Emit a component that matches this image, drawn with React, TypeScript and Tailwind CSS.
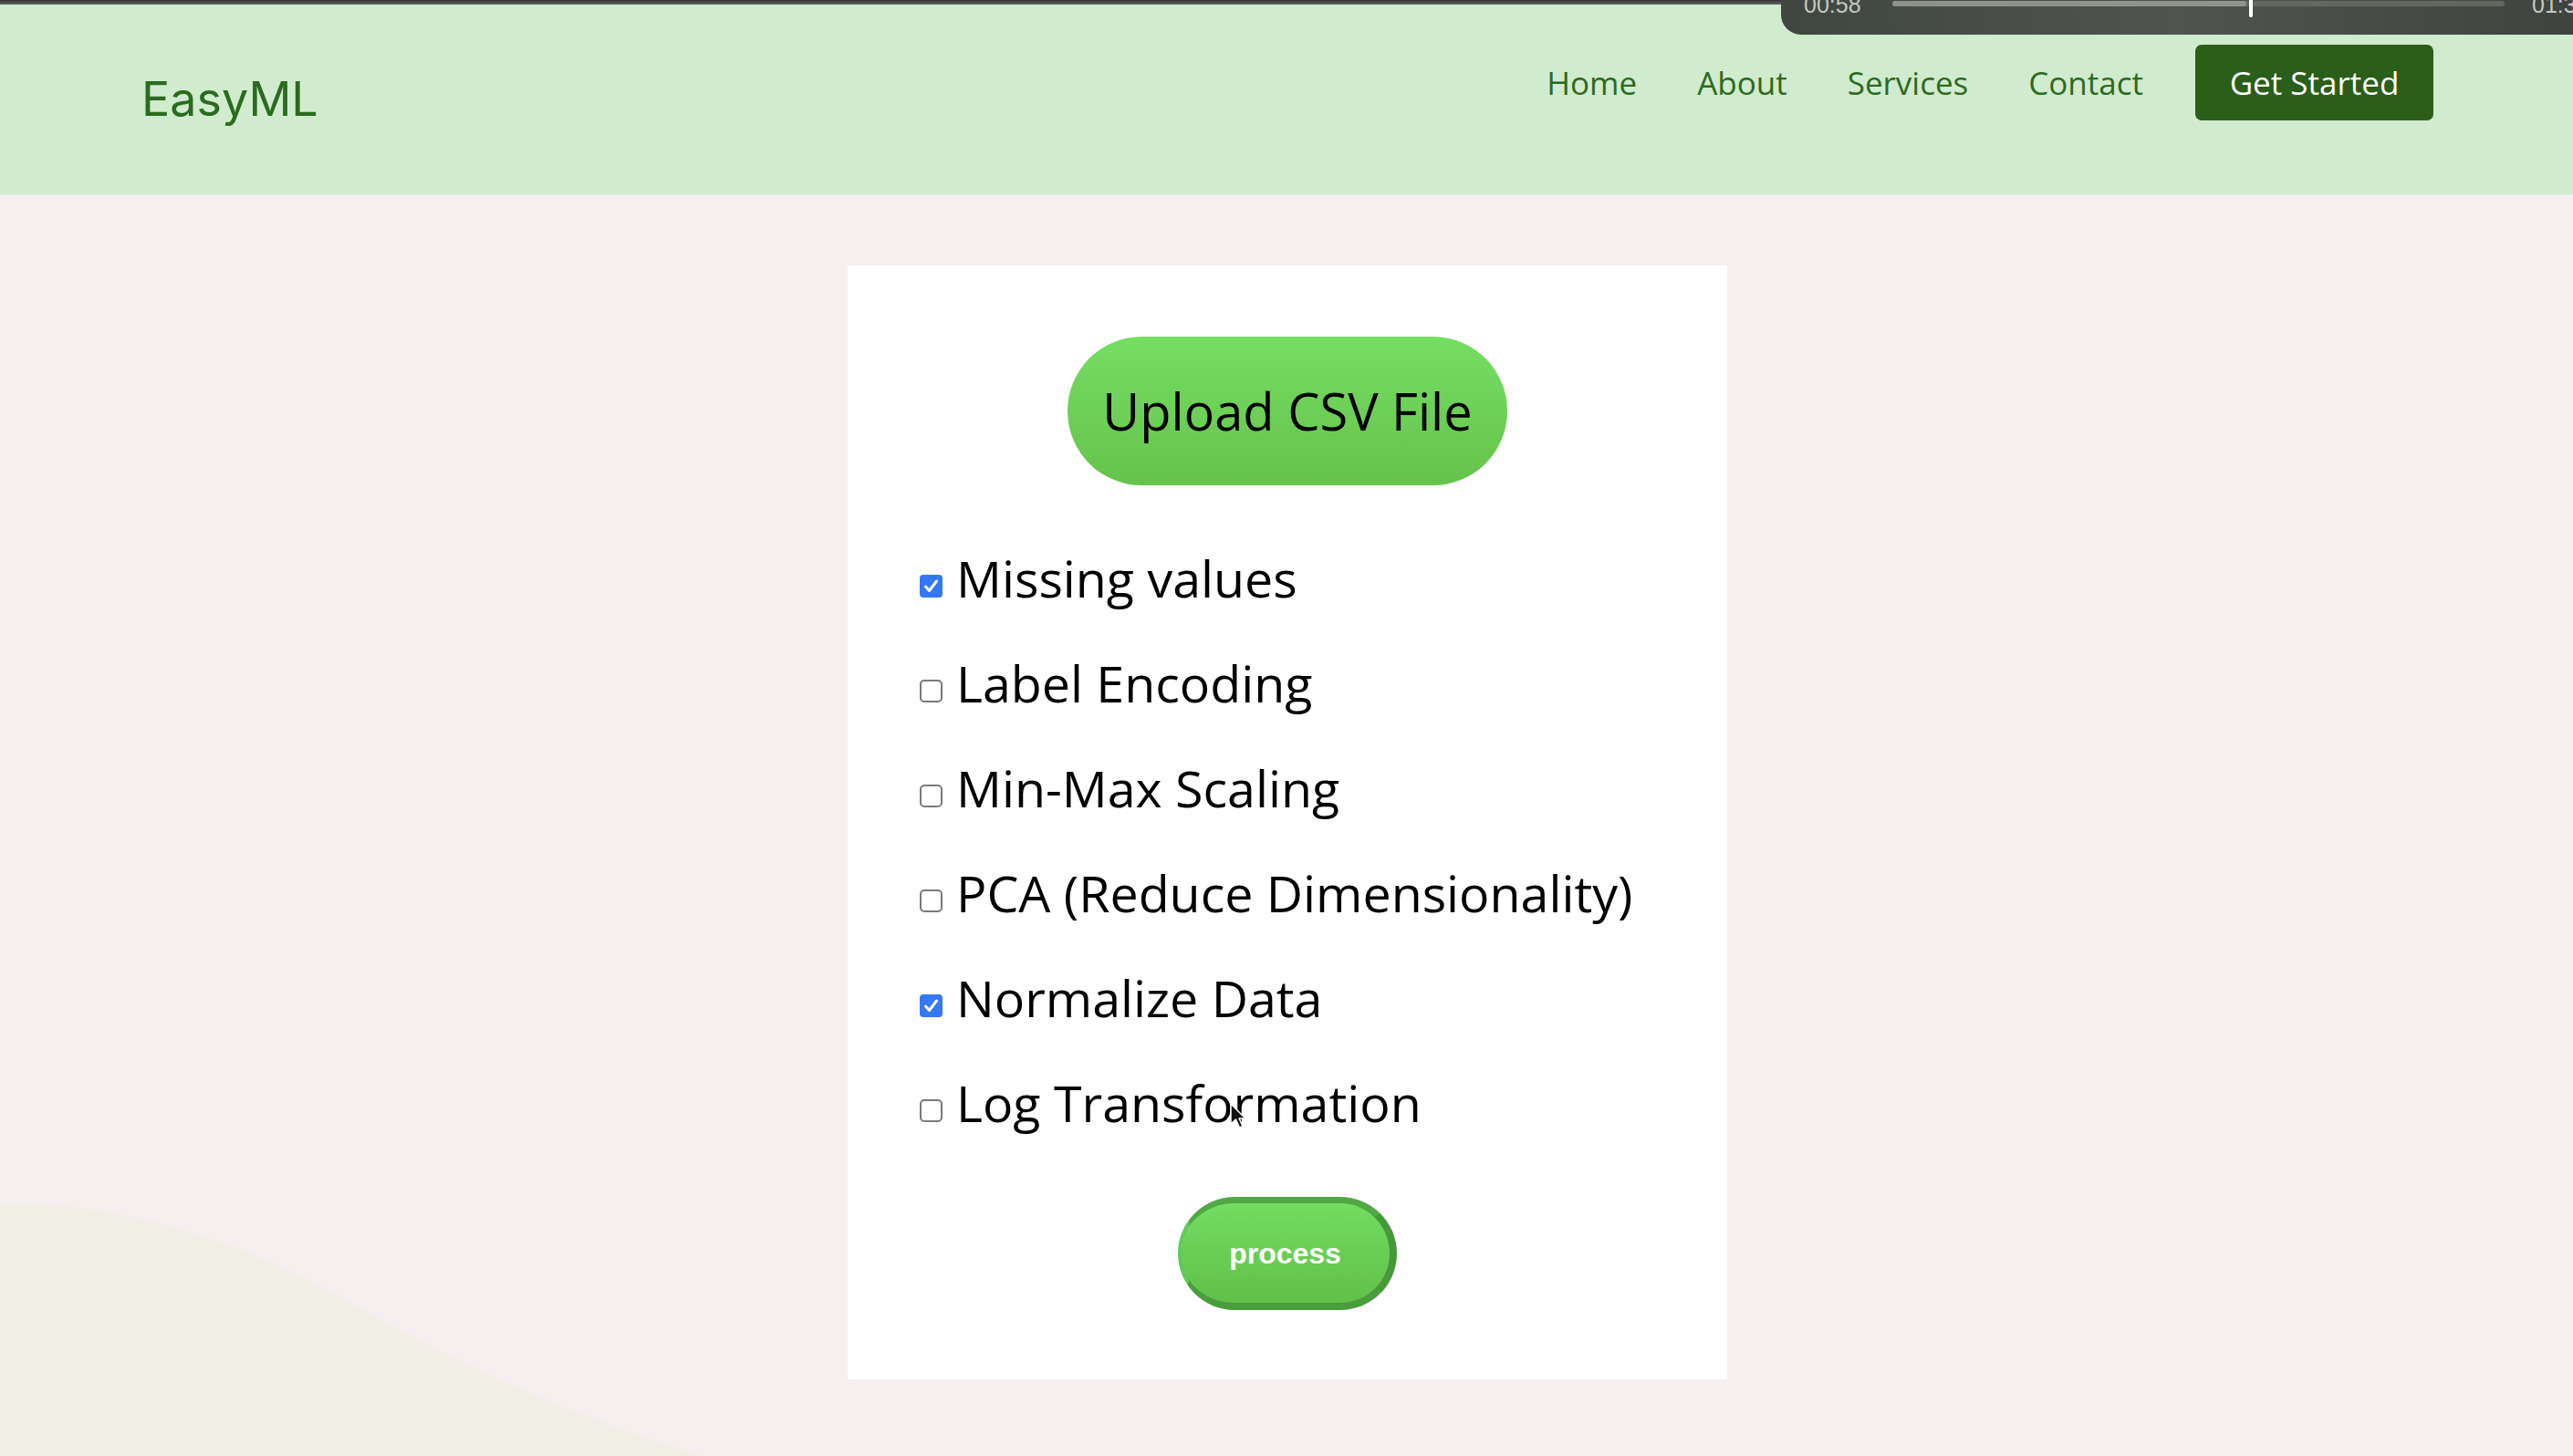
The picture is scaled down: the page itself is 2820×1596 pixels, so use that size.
import React from "react";

const items: { label: string; checked: boolean }[] = [
  { label: "Missing values", checked: true },
  { label: "Label Encoding", checked: false },
  { label: "Min-Max Scaling", checked: false },
  { label: "PCA (Reduce Dimensionality)", checked: false },
  { label: "Normalize Data", checked: true },
  { label: "Log Transformation", checked: false },
];

function Box({ checked }: { checked: boolean }) {
  if (checked) {
    return (
      <span className="inline-block w-[25px] h-[25px] shrink-0 rounded-[4px] bg-[#3478f6] relative mb-[1px]">
        <svg viewBox="0 0 25 25" className="absolute inset-0 w-[25px] h-[25px]">
          <path d="M6.5 13 L10.5 17.5 L18.5 7" fill="none" stroke="#ffffff" strokeWidth="3" strokeLinecap="round" strokeLinejoin="round" />
        </svg>
      </span>
    );
  }
  return <span className="inline-block w-[25px] h-[25px] shrink-0 rounded-[5px] bg-white border-2 border-[#7a7a7a] mb-[1px]" />;
}

export default function App() {
  return (
    <div className="relative w-full h-[1596px] overflow-hidden bg-[#f5f0ef] font-['Open_Sans',sans-serif]">
      {/* faint background curve */}
      <svg className="absolute left-0 bottom-0 w-[900px] h-[300px]" viewBox="0 0 900 300">
        <path d="M0 24 C 120 20, 260 60, 380 130 C 520 210, 640 260, 770 300 L0 300 Z" fill="#ecedde" opacity="0.6" />
      </svg>

      {/* top dark strip */}
      <div className="absolute top-0 left-0 w-full h-[5px] bg-gradient-to-b from-[#2f2f2f] to-[#6a6a6a] z-10" />

      {/* video overlay */}
      <div className="absolute top-0 left-[1952px] right-0 h-[38px] rounded-bl-[22px] bg-gradient-to-r from-[#404740] via-[#4f554e] to-[#3f443e] z-20 overflow-hidden">
        <span className="absolute left-[25px] top-[-7px] text-[25px] leading-[25px] text-[#c4c8c2] font-['Liberation_Sans',sans-serif]">00:58</span>
        <div className="absolute left-[122px] top-[1px] w-[671px] h-[6px] rounded-full bg-[#62675f]">
          <div className="h-full w-[388px] rounded-full bg-[#8e938b]" />
        </div>
        <div className="absolute left-[513px] top-0 w-[4px] h-[19px] rounded-b-full bg-white" />
        <span className="absolute left-[823px] top-[-7px] text-[25px] leading-[25px] text-[#c4c8c2] font-['Liberation_Sans',sans-serif] whitespace-nowrap">01:3</span>
      </div>

      {/* header */}
      <header className="relative h-[214px] bg-[#d1ebcf] flex items-start justify-between pl-[155px] pr-[153px] border-b border-[#e4ece8]">
        <div className="mt-[82px] text-[52px] leading-[54px] text-[#2b6b1f] font-['Inter',sans-serif]">EasyML</div>
        <nav className="mt-[49px] flex items-center">
          <div className="flex items-center gap-[66px] text-[35px] leading-[83px] text-[#2d6a20]">
            <span>Home</span>
            <span>About</span>
            <span>Services</span>
            <span>Contact</span>
          </div>
          <button className="ml-[57px] w-[261px] h-[83px] rounded-[7px] bg-[#2a5e19] text-white text-[35px] leading-[81px] text-center">
            Get Started
          </button>
        </nav>
      </header>

      {/* main */}
      <main className="flex justify-center pt-[77px]">
        <div className="ml-[2px] w-[964px] h-[1221px] bg-white pt-[78px] px-[77px] flex flex-col">
          <div className="flex justify-center">
            <button className="w-[482px] h-[163px] rounded-full bg-gradient-to-b from-[#76dd64] to-[#65c34b] text-black text-[56px] leading-[163px] text-center">
              Upload CSV File
            </button>
          </div>
          <div className="mt-[44px] flex flex-col">
            {items.map((it) => (
              <label key={it.label} className="h-[115px] pl-[2px] flex items-baseline gap-[15px] text-[55.5px] leading-[115px] text-black whitespace-nowrap">
                <Box checked={it.checked} />
                <span>{it.label}</span>
              </label>
            ))}
          </div>
          <div className="mt-[46px] flex justify-center">
            <button className="w-[240px] h-[124px] rounded-full bg-gradient-to-b from-[#73dc62] to-[#61c049] border-t-[7px] border-r-[8px] border-b-[8px] border-l-[3px] border-t-[#4fa843] border-r-[#46983a] border-b-[#4a9d3c] border-l-[#5bcb5a] text-white font-bold text-[32px] font-['Liberation_Sans',sans-serif] text-center">
              process
            </button>
          </div>
        </div>
      </main>

      {/* mouse cursor */}
      <svg className="absolute left-[1347px] top-[1208px] w-[22px] h-[32px] z-30" viewBox="0 0 22 32">
        <path d="M2 2 L2 24 L7.5 19 L11.5 28 L15 26.5 L11 18 L18 18 Z" fill="#111" stroke="#fff" strokeWidth="1.5" strokeLinejoin="round" />
      </svg>
    </div>
  );
}
